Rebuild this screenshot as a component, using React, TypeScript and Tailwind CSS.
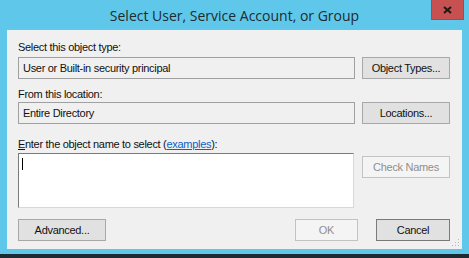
import React from "react";

const body = { fontFamily: '"Liberation Sans", Arial, sans-serif', letterSpacing: "-0.3px" };

function Btn({ children, w, disabled, dark }: { children: React.ReactNode; w: string; disabled?: boolean; dark?: boolean }) {
  const base = "h-[22px] flex items-center justify-center text-[11px] leading-none shrink-0 " + w + " ";
  const style = disabled
    ? "bg-[#f4f4f4] border border-[#c3c3c3] text-[#8f8f8f]"
    : dark
    ? "bg-[#e1e1e1] border border-[#7a7a7a] text-[#111]"
    : "bg-[#e1e1e1] border border-[#a8a8a8] text-[#111]";
  return <div className={base + style}>{children}</div>;
}

export default function App() {
  return (
    <div className="w-[469px] h-[258px] bg-[#5fc8ea] flex flex-col overflow-hidden" style={body}>
      <div className="relative h-[30px] shrink-0 flex items-center justify-center">
        <span
          className="text-[14px] text-[#1f2a30] mt-[1px]"
          style={{ fontFamily: '"Open Sans", "Noto Sans", sans-serif', letterSpacing: "0px" }}
        >
          Select User, Service Account, or Group
        </span>
        <div className="absolute left-[431px] top-0 w-[33px] h-[20px] bg-[#c75050] border-b border-x border-[#b04545] flex items-center justify-center">
          <svg width="9" height="8" viewBox="0 0 9 8">
            <path d="M1 1 L8 7 M8 1 L1 7" stroke="#1a1a1a" strokeWidth="2" />
          </svg>
        </div>
      </div>
      <div className="relative ml-[7px] w-[455px] h-[219px] bg-[#f0f0f0] shrink-0 flex flex-col pl-[11px] text-[11px] text-[#111]">
        <div className="mt-[10px] h-[14px] leading-[14px]">Select this object type:</div>
        <div className="mt-[3px] flex gap-[7px]">
          <div className="w-[337px] h-[22px] border border-[#a0a0a0] bg-[#f0f0f0] flex items-center pl-[4px] leading-none">
            User or Built-in security principal
          </div>
          <Btn w="w-[88px]">Object Types...</Btn>
        </div>
        <div className="mt-[8px] h-[14px] leading-[14px]">From this location:</div>
        <div className="mt-[1px] flex gap-[7px]">
          <div className="w-[337px] h-[22px] border border-[#a0a0a0] bg-[#f0f0f0] flex items-center pl-[4px] leading-none">
            Entire Directory
          </div>
          <Btn w="w-[88px]">Locations...</Btn>
        </div>
        <div className="mt-[13px] h-[14px] leading-[14px]">
          <span className="underline">E</span>nter the object name to select (
          <span className="text-[#0a63c9] underline">examples</span>):
        </div>
        <div className="mt-[2px] flex gap-[8px] items-start">
          <div className="w-[336px] h-[55px] bg-white border-t border-l border-[#7a7a7a] border-r border-b border-r-[#d8d8d8] border-b-[#d8d8d8] pl-[3px] pt-[4px]">
            <div className="w-px h-[12px] bg-black" />
          </div>
          <div className="mt-[3px]">
            <Btn w="w-[88px]" disabled>
              Check Names
            </Btn>
          </div>
        </div>
        <div className="mt-[11px] flex items-center">
          <Btn w="w-[88px]">Advanced...</Btn>
          <div className="ml-auto mr-[12px] flex gap-[18px]">
            <Btn w="w-[63px]" disabled>
              OK
            </Btn>
            <Btn w="w-[74px]" dark>
              Cancel
            </Btn>
          </div>
        </div>
        <svg className="absolute right-[2px] bottom-[2px]" width="8" height="8" viewBox="0 0 8 8">
          <rect x="6" y="0" width="1" height="1" fill="#b8b8b8" />
          <rect x="3" y="3" width="1" height="1" fill="#b8b8b8" />
          <rect x="6" y="3" width="1" height="1" fill="#b8b8b8" />
          <rect x="0" y="6" width="1" height="1" fill="#b8b8b8" />
          <rect x="3" y="6" width="1" height="1" fill="#b8b8b8" />
          <rect x="6" y="6" width="1" height="1" fill="#b8b8b8" />
        </svg>
      </div>
      <div className="h-[5px] shrink-0" />
      <div className="flex-1 bg-[#1d2a31]" />
    </div>
  );
}
